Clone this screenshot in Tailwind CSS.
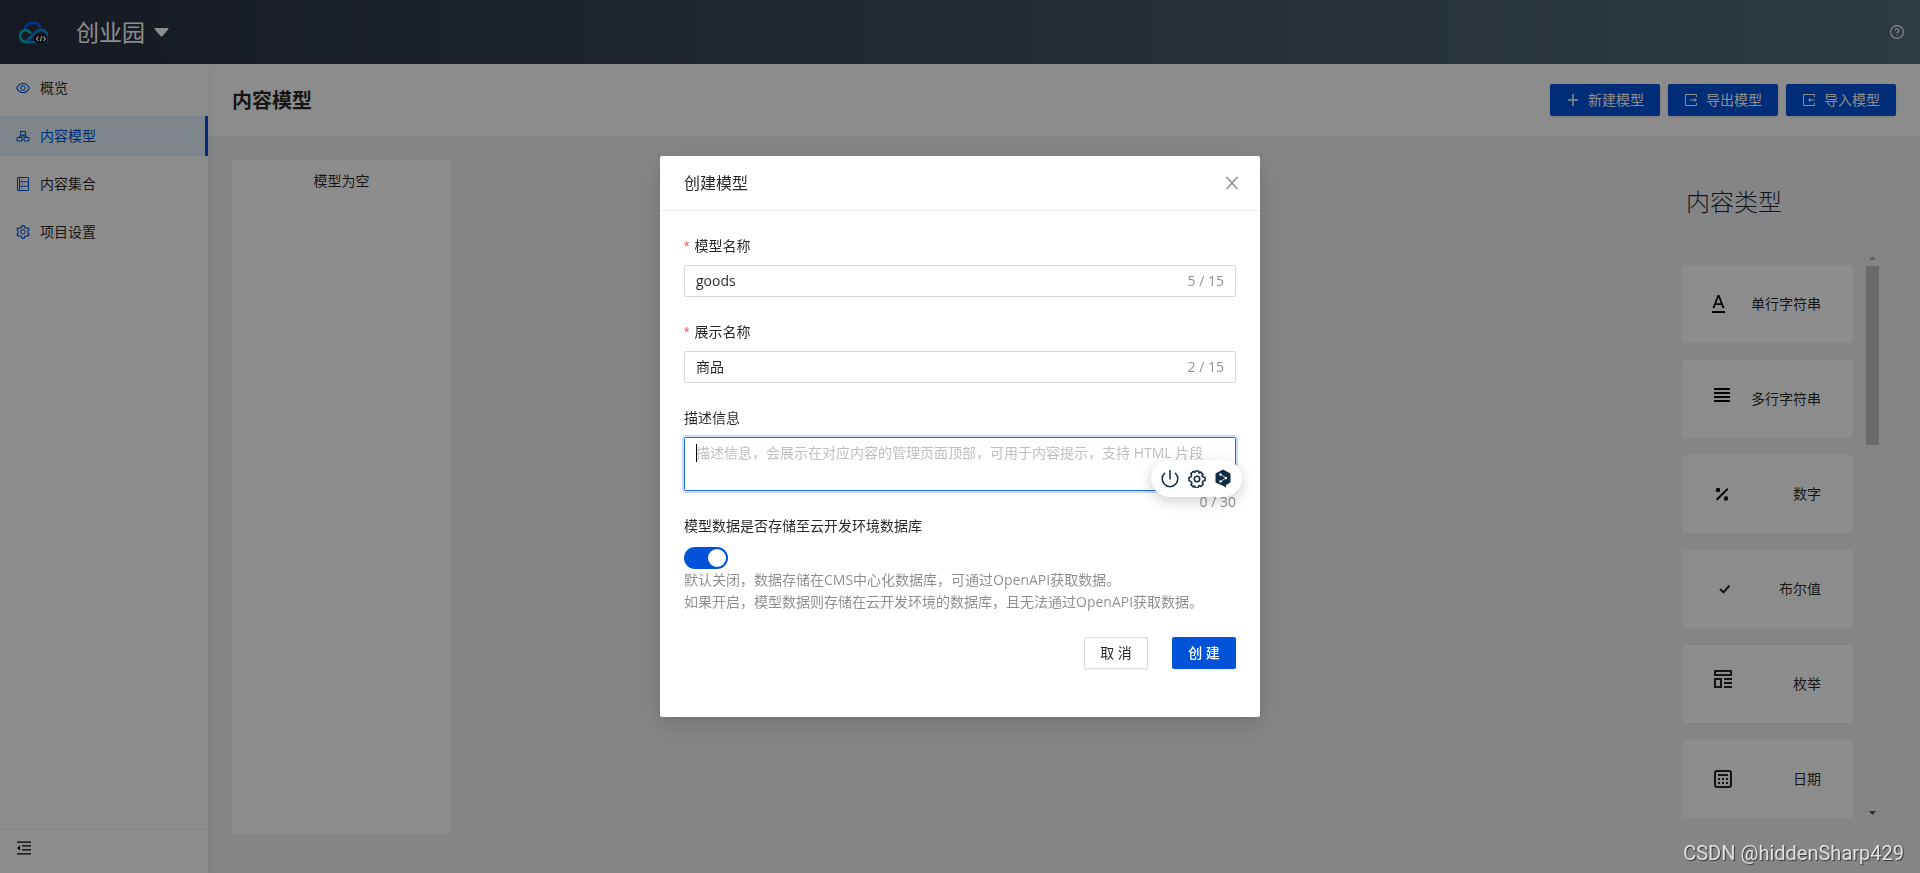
<!DOCTYPE html>
<html lang="zh-CN">
<head>
<meta charset="utf-8">
<title>内容模型</title>
<script src="https://cdn.jsdelivr.net/npm/@tailwindcss/browser@4"></script>
</head>
<body class="min-h-screen font-['Open_Sans','Noto_Sans_CJK_SC',sans-serif] text-sm leading-[22px] text-black/85">
<svg class="hidden" aria-hidden="true">
  <symbol id="gear" viewBox="64 64 896 896"><path d="M924.8 625.7l-65.5-56c3.1-19 4.7-38.4 4.7-57.8s-1.6-38.8-4.7-57.8l65.5-56a32.03 32.03 0 009.3-35.2l-.9-2.6a443.74 443.74 0 00-79.7-137.9l-1.8-2.1a32.12 32.12 0 00-35.1-9.5l-81.3 28.9c-30-24.6-63.5-44-99.7-57.6l-15.7-85a32.05 32.05 0 00-25.8-25.7l-2.7-.5c-52.1-9.4-106.9-9.4-159 0l-2.7.5a32.05 32.05 0 00-25.8 25.7l-15.8 85.4a351.86 351.86 0 00-99 57.4l-81.9-29.1a32 32 0 00-35.1 9.5l-1.8 2.1a446.02 446.02 0 00-79.7 137.9l-.9 2.6c-4.5 12.5-.8 26.5 9.3 35.2l66.3 56.6c-3.1 18.8-4.6 38-4.6 57.1 0 19.2 1.5 38.4 4.6 57.1L99 625.5a32.03 32.03 0 00-9.3 35.2l.9 2.6c18.1 50.4 44.9 96.9 79.7 137.9l1.8 2.1a32.12 32.12 0 0035.1 9.5l81.9-29.1c29.8 24.5 63.1 43.9 99 57.4l15.8 85.4a32.05 32.05 0 0025.8 25.7l2.7.5a449.4 449.4 0 00159 0l2.7-.5a32.05 32.05 0 0025.8-25.7l15.7-85a350 350 0 0099.7-57.6l81.3 28.9a32 32 0 0035.1-9.5l1.8-2.1c34.8-41.1 61.6-87.5 79.7-137.9l.9-2.6c4.5-12.3.8-26.3-9.3-35zM788.3 465.9c2.5 15.1 3.8 30.6 3.8 46.1s-1.3 31-3.8 46.1l-6.6 40.1 74.7 63.9a370.03 370.03 0 01-42.6 73.6L721 702.8l-31.4 25.8c-23.9 19.6-50.5 35-79.3 45.8l-38.1 14.3-17.9 97a377.5 377.5 0 01-85 0l-17.9-97.2-37.8-14.5c-28.5-10.8-55-26.2-78.7-45.7l-31.4-25.9-93.4 33.2c-17-22.9-31.2-47.6-42.6-73.6l75.5-64.5-6.5-40c-2.4-14.9-3.7-30.3-3.7-45.5 0-15.3 1.2-30.6 3.7-45.5l6.5-40-75.5-64.5c11.3-26.1 25.6-50.7 42.6-73.6l93.4 33.2 31.4-25.9c23.7-19.5 50.2-34.9 78.7-45.7l37.9-14.3 17.9-97.2c28.1-3.2 56.8-3.2 85 0l17.9 97 38.1 14.3c28.7 10.8 55.4 26.2 79.3 45.8l31.4 25.8 92.8-32.9c17 22.9 31.2 47.6 42.6 73.6L781.8 426l6.5 39.9zM512 326c-97.2 0-176 78.8-176 176s78.8 176 176 176 176-78.8 176-176-78.8-176-176-176zm79.2 255.2A111.6 111.6 0 01512 614c-29.9 0-58-11.7-79.2-32.8A111.6 111.6 0 01400 502c0-29.9 11.7-58 32.8-79.2C454 401.6 482.1 390 512 390c29.9 0 58 11.6 79.2 32.8A111.6 111.6 0 01624 502c0 29.9-11.7 58-32.8 79.2z"/></symbol>
</svg>

<div class="flex min-h-screen flex-col bg-[#f0f2f5]">
  <header class="flex h-16 items-center bg-linear-to-r from-[#28303f] to-[#546d7a] px-4 text-white">
    <svg class="h-6 w-8" viewBox="0 0 32 24" fill="none" aria-label="CloudBase">
      <path d="M9 9A8.300 8.300 0 0 1 24.500 7.500" stroke="#0060ff" stroke-width="2.600"/>
      <path d="M15 13.500C13 10.800 10.500 9.800 8.500 10.300A6 6 0 0 0 9.500 22H13" stroke="#00b8c0" stroke-width="2.600"/>
      <path d="M10 21.500L20 12C24 8 31.500 10 31.500 16.500C31.500 19.500 30 22 27 22H11" stroke="#0091e6" stroke-width="2.600"/>
      <rect x="18" y="14" width="13.500" height="9" rx="4.500" fill="#0a0d14"/>
      <path d="M22.500 16.500l-2 2.300 2 2.200M27.500 16.500l2 2.300-2 2.200M25.800 16l-1.500 5.500" stroke="#fff" stroke-width="1.200"/>
    </svg>
    <button type="button" class="ml-7 flex items-center gap-[9px] text-[23px] leading-8">创业园
      <svg class="h-[9px] w-[15px]" viewBox="0 0 15 9" fill="currentColor"><path d="M1.500 0h12c1 0 1.300.9.700 1.600L8.300 8.300q-.8.900-1.600 0L.8 1.600C.2.900.5 0 1.500 0z"/></svg>
    </button>
    <button type="button" aria-label="帮助" class="ml-auto">
      <svg class="size-[14px]" viewBox="0 0 14 14" fill="none" stroke="currentColor" stroke-width="1.100"><circle cx="7" cy="7" r="6.400"/><path d="M5 5.600C5 4.400 5.900 3.700 7 3.700s2 .7 2 1.800S7.100 6.900 7 8.300"/><path d="M6.400 10h1.200"/></svg>
    </button>
  </header>

  <div class="flex grow">
    <aside class="z-10 flex w-52 shrink-0 flex-col bg-white shadow-[2px_0_8px_rgba(29,35,41,0.05)]">
      <nav class="flex grow flex-col gap-2 pt-1">
        <a href="#" class="flex h-10 items-center gap-[10px] pl-4"><svg class="size-[14px] fill-[#0052d9]" viewBox="64 64 896 896"><path d="M942.2 486.2C847.4 286.5 704.1 186 512 186c-192.2 0-335.4 100.500-430.200 300.300a60.300 60.300 0 000 51.500C176.600 737.500 319.900 838 512 838c192.200 0 335.400-100.500 430.200-300.300 7.700-16.200 7.700-35 0-51.500zM512 766c-161.300 0-279.400-81.800-362.700-254C232.600 339.800 350.700 258 512 258c161.300 0 279.400 81.800 362.700 254C791.500 684.200 673.400 766 512 766zm-4-430c-97.200 0-176 78.800-176 176s78.800 176 176 176 176-78.800 176-176-78.800-176-176-176zm0 288c-61.900 0-112-50.100-112-112s50.100-112 112-112 112 50.100 112 112-50.100 112-112 112z"/></svg>概览</a>
        <a href="#" aria-current="page" class="flex h-10 items-center gap-[10px] border-r-[3px] border-[#0052d9] bg-[#e6f4ff] pl-4 text-[#0052d9]"><svg class="size-[14px]" viewBox="0 0 14 14" fill="none" stroke="currentColor" stroke-width="1"><path d="M4.500 2.500h5v3.500h-5zM1 8.500h5V12H1zM8 8.500h5V12H8zM3.500 8.500V7h7v1.500M7 6v1"/></svg>内容模型</a>
        <a href="#" class="flex h-10 items-center gap-[10px] pl-4"><svg class="size-[14px] text-[#0052d9]" viewBox="0 0 14 14" fill="none" stroke="currentColor"><path d="M1.500.5h11v13h-11zM3.500.5v13M3.500 4.800h9M3.500 9.200h9M5.500 2.700h1M5.500 7h1M5.500 11.300h1"/></svg>内容集合</a>
        <a href="#" class="flex h-10 items-center gap-[10px] pl-4"><svg class="size-[14px] fill-[#0052d9]"><use href="#gear"/></svg>项目设置</a>
      </nav>
      <div class="flex h-11 items-start border-t border-[#f0f0f0] pt-[10px] pl-4">
        <button type="button" aria-label="收起菜单"><svg class="size-4" viewBox="0 0 16 16"><path d="M1 1.500h14v1.300H1zM6 5.200h9v1.300H6zM6 9.300h9v1.300H6zM1 13.200h14v1.300H1zM4 5.500v5L1 8z"/></svg></button>
      </div>
    </aside>

    <main class="flex grow flex-col">
      <div class="flex h-[72px] items-center gap-2 bg-white px-6">
        <h1 class="mr-auto pt-[2px] text-xl font-bold leading-8">内容模型</h1>
        <button type="button" class="flex h-8 items-center gap-2 rounded-xs bg-[#0052d9] px-4 text-white shadow-sm"><svg class="size-[14px]" viewBox="0 0 14 14" fill="none" stroke="currentColor" stroke-width="1.500"><path d="M7 1v12M2 7h10"/></svg>新建模型</button>
        <button type="button" class="flex h-8 items-center gap-2 rounded-xs bg-[#0052d9] px-4 text-white shadow-sm"><svg class="size-[14px]" viewBox="0 0 14 14" fill="none" stroke="currentColor"><path d="M12.500 4V1.500h-11v11h11V10M6 7h5"/><path d="M10.500 5L13 7l-2.500 2z" fill="currentColor" stroke="none"/></svg>导出模型</button>
        <button type="button" class="flex h-8 items-center gap-2 rounded-xs bg-[#0052d9] px-4 text-white shadow-sm"><svg class="size-[14px]" viewBox="0 0 14 14" fill="none" stroke="currentColor"><path d="M12.500 4V1.500h-11v11h11V10M8 7h5"/><path d="M8.500 5L6 7l2.500 2z" fill="currentColor" stroke="none"/></svg>导入模型</button>
      </div>

      <div class="flex grow justify-between pt-6 pr-[39px] pb-10 pl-6">
        <section class="w-[219px] bg-white pt-[10px] text-center">模型为空</section>
        <aside class="flex w-[199px] flex-col pt-6">
          <h2 class="pl-1 text-2xl font-light leading-9">内容类型</h2>
          <div class="mt-[30px] flex h-[572px] justify-between">
            <ul class="flex w-[171px] flex-col gap-[17px] pt-[15px]">
              <li class="flex h-[78px] items-center justify-between rounded-sm bg-white pr-8 pl-7"><svg class="h-6 w-6" viewBox="0 0 24 24"><path d="M2 19h13v2H2zM7.600 3h1.800L14.500 16h-2L11.400 13H5.600L4.500 16h-2zM6.300 11.200h4.400L8.500 5.300z"/></svg>单行字符串</li>
              <li class="flex h-[78px] items-center justify-between rounded-sm bg-white pr-8 pl-7"><svg class="mb-2 size-6" viewBox="0 0 24 24"><path d="M4 15h16v-2H4v2zm0 4h16v-2H4v2zm0-8h16V9H4v2zm0-6v2h16V5H4z"/></svg>多行字符串</li>
              <li class="flex h-[78px] items-center justify-between rounded-sm bg-white pr-8 pl-7"><svg class="size-6" viewBox="0 0 24 24"><circle cx="8" cy="8" r="2.200"/><circle cx="16" cy="16.500" r="2.200"/><path d="M17.200 5.900l1.300 1.300L7.300 18.400 6 17.100z"/></svg>数字</li>
              <li class="flex h-[78px] items-center justify-between rounded-sm bg-white pr-8 pl-7"><svg class="size-6" viewBox="0 0 24 24" fill="none" stroke="currentColor" stroke-width="2"><path d="M10 12l3.500 3.300L19.500 8.500"/></svg>布尔值</li>
              <li class="flex h-[78px] items-center justify-between rounded-sm bg-white pr-8 pl-7"><svg class="mb-[10px] size-6" viewBox="0 0 24 24" fill="none" stroke="currentColor" stroke-width="2"><path d="M5 4h16v4H5zM5 12h6v8H5zM14 12h8M14 16h8M14 20h8"/></svg>枚举</li>
              <li class="flex h-[78px] items-center justify-between rounded-sm bg-white pr-8 pl-7"><svg class="size-6" viewBox="0 0 24 24" fill="none" stroke="currentColor" stroke-width="2"><rect x="5" y="4" width="16" height="16" rx="2"/><path d="M8 8h10M8 12h2M12 12h2M16 12h2M8 16h2M12 16h2M16 16h2"/></svg>日期</li>
            </ul>
            <div class="flex w-[17px] flex-col items-center bg-[#f1f1f1]">
              <svg class="h-4 w-[17px] shrink-0 fill-[#a3a3a3]" viewBox="0 0 17 16"><path d="M5 10h7L8.500 6.500z"/></svg>
              <div class="h-[179px] w-[13px] bg-[#c1c1c1]"></div>
              <svg class="mt-auto h-4 w-[17px] shrink-0 fill-[#505050]" viewBox="0 0 17 16"><path d="M5 5h7L8.500 9z"/></svg>
            </div>
          </div>
        </aside>
      </div>
    </main>
  </div>
</div>

<div class="fixed inset-0 z-20 flex items-start justify-center bg-black/45 pt-[156px]">
  <section role="dialog" aria-labelledby="dialog-title" class="w-[600px] rounded-xs bg-white shadow-[0_3px_6px_-4px_rgba(0,0,0,0.12),0_6px_16px_rgba(0,0,0,0.08),0_9px_28px_8px_rgba(0,0,0,0.05)]">
    <div class="flex h-[55px] items-center justify-between border-b border-[#f0f0f0] pr-[21px] pl-6">
      <h2 id="dialog-title" class="text-base">创建模型</h2>
      <button type="button" aria-label="关闭"><svg class="size-[14px] text-black/45" viewBox="0 0 14 14" fill="none" stroke="currentColor" stroke-width="1.400"><path d="M1.500 1l11 12M12.500 1l-11 12"/></svg></button>
    </div>
    <form class="flex flex-col px-6 pt-6 pb-12">
      <label for="name" class="flex gap-[5px]"><span class="font-['Liberation_Sans'] text-[#ff4d4f]">*</span>模型名称</label>
      <div class="mt-2 mb-6 flex h-8 items-center rounded-xs border border-[#d9d9d9] px-[11px]">
        <input id="name" value="goods" class="min-w-0 grow outline-none"><span class="text-black/45">5 / 15</span>
      </div>
      <label for="display" class="flex gap-[5px]"><span class="font-['Liberation_Sans'] text-[#ff4d4f]">*</span>展示名称</label>
      <div class="mt-2 mb-6 flex h-8 items-center rounded-xs border border-[#d9d9d9] px-[11px]">
        <input id="display" value="商品" class="min-w-0 grow outline-none"><span class="text-black/45">2 / 15</span>
      </div>
      <label for="desc">描述信息</label>
      <div class="relative mt-2 flex">
        <textarea id="desc" placeholder="描述信息，会展示在对应内容的管理页面顶部，可用于内容提示，支持 HTML 片段" class="h-[54px] w-full resize-none rounded-xs border border-[#266fe8] px-[11px] py-1 shadow-[0_0_0_2px_rgba(0,82,217,0.2)] outline-none placeholder:text-[#bfbfbf]"></textarea>
        <span class="absolute top-[7px] left-3 h-[18px] w-px bg-black"></span>
        <div class="absolute top-[23px] -right-[6px] flex h-[37px] w-[91px] items-center justify-center gap-[9px] rounded-full bg-white pr-[2px] text-[#0f2b46] shadow-[0_4px_14px_rgba(0,0,0,0.2)]">
          <button type="button" aria-label="开关"><svg class="size-[18px]" viewBox="0 0 18 18" fill="none" stroke="currentColor" stroke-width="1.500" stroke-linecap="round"><path d="M9 .5v8.500M3.600 3.200a7.800 7.800 0 1 0 10.800 0"/></svg></button>
          <button type="button" aria-label="设置"><svg class="size-[18px]" viewBox="0 0 18 18" fill="none" stroke="currentColor" stroke-width="1.600" stroke-linejoin="round"><path d="M7.400 1h3.200l.6 2 1.600-.9 2.200 2.200-1 1.700.9.800 2.100.6v3.200l-2.100.6-.6 1.500.8 1.600-2.200 2.200-1.700-.9-.6.500-.6 1.900H7.400l-.6-2-1.600.9L3 14.600l.9-1.700-.8-1.300L1 10.600V7.400l2-.6.6-1.300L2.900 3.600l2.200-2.100 1.700.9z"/><circle cx="9" cy="9" r="2.700"/></svg></button>
          <button type="button" aria-label="翻译"><svg class="h-[19px] w-4" viewBox="0 0 16 19"><path d="M8 .4L15 4.300q.5.300.5.900v7.600q0 .6-.5.900l-4 2.200.1 2.700-3.700-2L1 13.700q-.5-.3-.5-.9V5.200q0-.6.500-.9z" fill="currentColor"/><path d="M5.500 5.500l5.500 3.500-5.500 3.500" fill="none" stroke="#fff" stroke-width=".8"/><circle cx="5.500" cy="5.500" r="1.200" fill="#fff"/><circle cx="11" cy="9" r="1.200" fill="#fff"/><circle cx="5.500" cy="12.500" r="1.200" fill="#fff"/></svg></button>
        </div>
      </div>
      <span class="self-end text-black/45">0 / 30</span>
      <label for="store" class="mt-[2px]">模型数据是否存储至云开发环境数据库</label>
      <input id="store" type="checkbox" role="switch" checked class="mt-[10px] h-[22px] w-11 appearance-none rounded-full bg-[#0052d9] before:mt-[2px] before:ml-6 before:block before:size-[18px] before:rounded-full before:bg-white">
      <p class="text-black/45">默认关闭，数据存储在CMS中心化数据库，可通过OpenAPI获取数据。<br>如果开启，模型数据则存储在云开发环境的数据库，且无法通过OpenAPI获取数据。</p>
      <div class="mt-6 flex justify-end gap-6">
        <button type="button" class="h-8 w-16 rounded-xs border border-[#d9d9d9] bg-white shadow-xs">取 消</button>
        <button type="submit" class="h-8 w-16 rounded-xs bg-[#0052d9] font-medium text-white shadow-xs">创 建</button>
      </div>
    </form>
  </section>
</div>
<p class="fixed right-4 bottom-2 z-30 font-[Roboto,sans-serif] text-xl leading-6 text-white/80 [text-shadow:1px_1px_1px_rgba(0,0,0,0.6)]">CSDN @hiddenSharp429</p>
</body>
</html>
